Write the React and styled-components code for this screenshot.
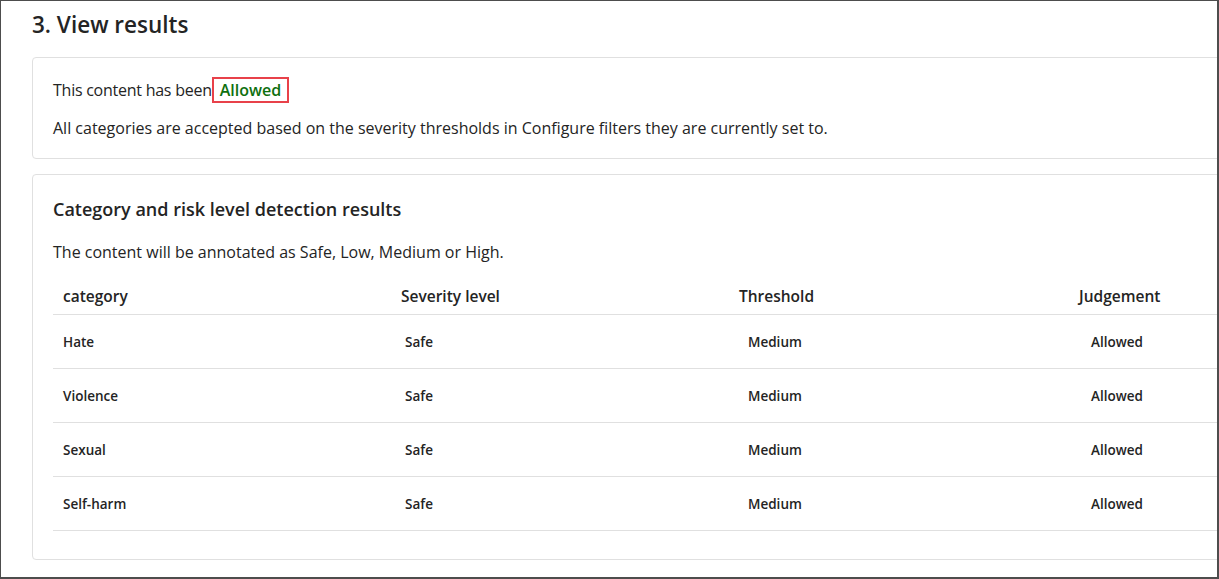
import React from "react";
import styled, { createGlobalStyle } from "styled-components";

const GlobalStyle = createGlobalStyle`
  html, body {
    margin: 0;
    padding: 0;
    background: #ffffff;
  }
  body {
    font-family: "Open Sans", "Noto Sans", "Liberation Sans", sans-serif;
    color: #242424;
  }
`;

const Frame = styled.div`
  width: 1219px;
  height: 579px;
  box-sizing: border-box;
  border: 1px solid #4d4d4d;
  border-right-width: 2px;
  border-bottom-width: 2px;
  overflow: hidden;
  padding: 0 0 0 31px;
`;

const Content = styled.div`
  width: 1420px;
  display: flex;
  flex-direction: column;
  gap: 15px;
`;

const Title = styled.h2`
  margin: 8px 0 17px;
  font-size: 22.5px;
  line-height: 31px;
  font-weight: 600;
  color: #242424;
`;

const Card = styled.section`
  border: 1px solid #e0e0e0;
  border-radius: 4px;
  padding: ${(p) => p.$pad || "20px"};
  display: flex;
  flex-direction: column;
`;

const Line = styled.p`
  margin: 0;
  font-size: 16px;
  line-height: 22px;
  margin-bottom: ${(p) => p.$gap || "0"};
  letter-spacing: ${(p) => p.$tight ? "-0.25px" : "normal"};
`;

const Verdict = styled.span`
  display: inline-block;
  color: #0e700e;
  font-weight: 600;
  letter-spacing: normal;
  border: 2px solid #e8414a;
  padding: 1px 6px 1px 6px;
  line-height: 20px;
`;

const Heading = styled.h3`
  margin: 0 0 20px;
  font-size: 18px;
  line-height: 24px;
  font-weight: 600;
`;

const Table = styled.div`
  display: flex;
  flex-direction: column;
  margin-top: 15px;
`;

const Row = styled.div`
  display: grid;
  grid-template-columns: repeat(4, 342px);
  align-items: center;
  height: ${(p) => (p.$head ? "36px" : "53px")};
  border-bottom: 1px solid #e0e0e0;
`;

const HeadCell = styled.div`
  font-size: 15.5px;
  font-weight: 600;
  padding-left: ${(p) => p.$indent}px;
`;

const Cell = styled.div`
  font-size: 13.5px;
  font-weight: 600;
  padding-left: ${(p) => p.$indent}px;
`;

const headIndent = [10, 6, 2, 0];
const cellIndent = [10, 10, 11, 12];

const rows = [
  ["Hate", "Safe", "Medium", "Allowed"],
  ["Violence", "Safe", "Medium", "Allowed"],
  ["Sexual", "Safe", "Medium", "Allowed"],
  ["Self-harm", "Safe", "Medium", "Allowed"],
];

export default function App() {
  return (
    <>
      <GlobalStyle />
      <Frame>
        <Title>3. View results</Title>
        <Content>
          <Card $pad="19px 20px 19px">
            <Line $gap="14px" $tight>
              This content has been<Verdict>Allowed</Verdict>
            </Line>
            <Line>
              All categories are accepted based on the severity thresholds in
              Configure filters they are currently set to.
            </Line>
          </Card>
          <Card $pad="22px 20px 28px">
            <Heading>Category and risk level detection results</Heading>
            <Line>The content will be annotated as Safe, Low, Medium or High.</Line>
            <Table>
              <Row $head>
                {["category", "Severity level", "Threshold", "Judgement"].map((h, i) => (
                  <HeadCell key={h} $indent={headIndent[i]}>{h}</HeadCell>
                ))}
              </Row>
              {rows.map((r) => (
                <Row key={r[0]}>
                  {r.map((c, i) => (
                    <Cell key={i} $indent={cellIndent[i]}>{c}</Cell>
                  ))}
                </Row>
              ))}
            </Table>
          </Card>
        </Content>
      </Frame>
    </>
  );
}
